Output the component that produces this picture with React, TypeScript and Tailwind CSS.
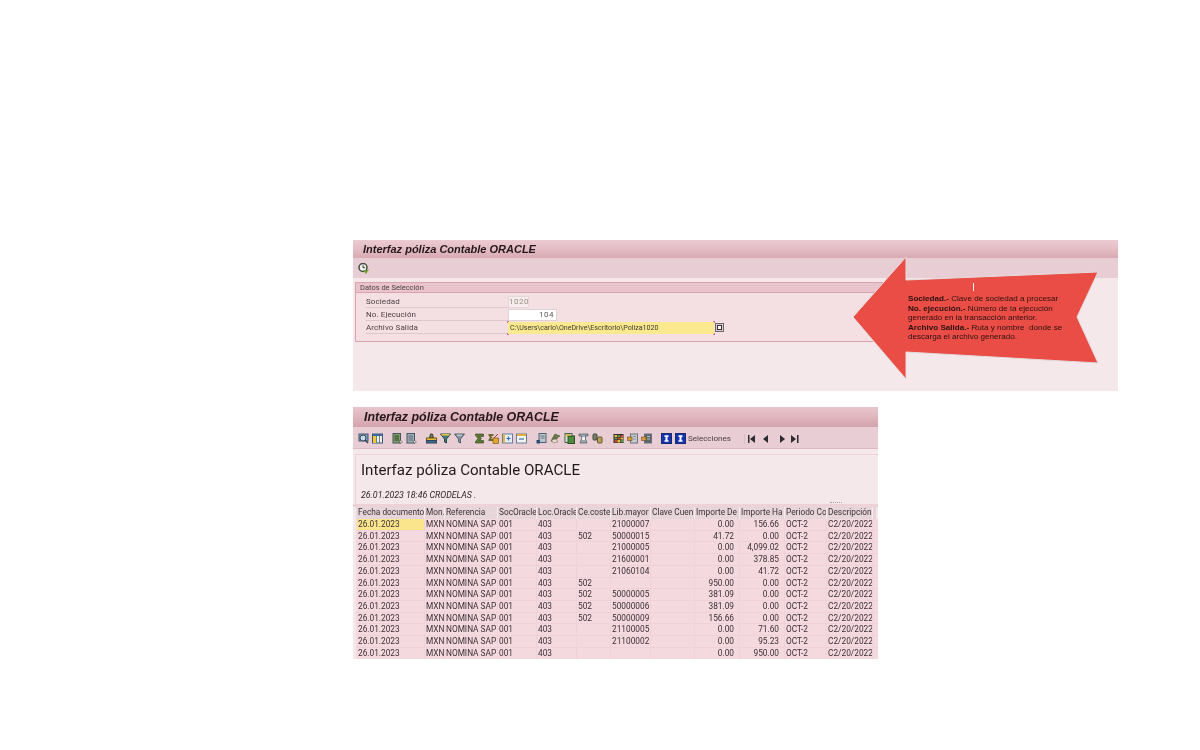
const columns = [
  { label: 'Fecha documento', w: 'w-[68px]' },
  { label: 'Mon.', w: 'w-[20px]' },
  { label: 'Referencia', w: 'w-[53px]' },
  { label: 'SocOracle', w: 'w-[39px]' },
  { label: 'Loc.Oracle', w: 'w-[40px]' },
  { label: 'Ce.coste', w: 'w-[34px]' },
  { label: 'Lib.mayor', w: 'w-[40px]' },
  { label: 'Clave Cuen', w: 'w-[44px]' },
  { label: 'Importe De', w: 'w-[45px]' },
  { label: 'Importe Ha', w: 'w-[45px]' },
  { label: 'Periodo Co', w: 'w-[42px]' },
  { label: 'Descripción', w: 'w-[46px]' },
];

const rows = [
  ['', '21000007', '0.00', '156.66'],
  ['502', '50000015', '41.72', '0.00'],
  ['', '21000005', '0.00', '4,099.02'],
  ['', '21600001', '0.00', '378.85'],
  ['', '21060104', '0.00', '41.72'],
  ['502', '', '950.00', '0.00'],
  ['502', '50000005', '381.09', '0.00'],
  ['502', '50000006', '381.09', '0.00'],
  ['502', '50000009', '156.66', '0.00'],
  ['', '21100005', '0.00', '71.60'],
  ['', '21100002', '0.00', '95.23'],
  ['', '', '0.00', '950.00'],
];

function Cell({ i, right, first, children }: { i: number; right?: boolean; first?: boolean; children?: React.ReactNode }) {
  return (
    <div
      className={`${columns[i].w} shrink-0 h-full px-[1px] border-r border-[#f0d3da] leading-[11px] whitespace-nowrap overflow-hidden ${right ? 'text-right pr-[5px]' : ''} ${first ? 'bg-[#fbe58c]' : ''}`}
    >
      {children}
    </div>
  );
}

function Ico({ children }: { children: React.ReactNode }) {
  return (
    <svg viewBox="0 0 11 11" className="w-[11px] h-[11px] shrink-0">
      {children}
    </svg>
  );
}

const Search = () => (
  <Ico>
    <rect x="1" y="1" width="9" height="7" fill="#7c9fbb" stroke="#47586b" />
    <circle cx="5" cy="5" r="3" fill="#c4d9ea" stroke="#39485a" />
    <path d="M7 7l3 3" stroke="#39485a" strokeWidth="1.6" />
  </Ico>
);
const Layout = () => (
  <Ico>
    <rect x="0.5" y="1" width="10" height="9" fill="#f5f0d8" stroke="#3d5a80" />
    <rect x="1" y="1" width="9" height="2" fill="#3d6a9b" />
    <rect x="1" y="3" width="3" height="7" fill="#f0c832" />
    <path d="M4.5 3v7M7.5 3v7" stroke="#5b7da3" />
  </Ico>
);
const Doc = ({ green }: { green?: boolean }) => (
  <Ico>
    <rect x="1" y="0.5" width="7.5" height="9.5" fill={green ? '#83a06f' : '#9fb0bb'} stroke="#46545f" />
    <path d="M2.5 3h4.5M2.5 5h4.5M2.5 7h4.5" stroke={green ? '#23441c' : '#5b6b77'} />
    <path d="M8 7l2.5 2-2.5 1.5z" fill="#fff" stroke="#333" strokeWidth="0.5" />
  </Ico>
);
const Bell = () => (
  <Ico>
    <path d="M3.5 5L4.5 1h2l1 4z" fill="#6d7f55" stroke="#3a4530" />
    <rect x="0.5" y="5" width="10" height="2.5" fill="#e8b93b" stroke="#6f5a20" />
    <rect x="0.5" y="7.5" width="10" height="2.5" fill="#3c6d94" stroke="#2d4257" />
  </Ico>
);
const Funnel = ({ grey }: { grey?: boolean }) => (
  <Ico>
    <path d="M0.5 1h10L6.5 6v4l-2-1V6z" fill={grey ? '#8b98a3' : '#3d7b7a'} stroke={grey ? '#56616b' : '#234a4a'} />
    {!grey && <rect x="1.5" y="1" width="8" height="1.6" fill="#e9c23c" />}
    {grey && <path d="M3 2.2h5" stroke="#d7dde2" />}
  </Ico>
);
const Sigma = () => (
  <Ico>
    <path d="M1.5 1h8v2.5H5.5l2 2-2 2h4V10h-8V8.5L4 5.5 1.5 2.5z" fill="#5f7a33" stroke="#2f3e1b" strokeWidth="0.6" />
  </Ico>
);
const Subtotal = () => (
  <Ico>
    <path d="M0.5 1h5v2H3l1.5 1.5L3 6h2.5v2h-5V6.5L2 4.5 0.5 2.5z" fill="#6b6b2a" />
    <rect x="5" y="5" width="5.5" height="5.5" fill="#e2a72c" stroke="#6f4f14" strokeWidth="0.6" />
    <path d="M10 1L6 5" stroke="#a33" />
  </Ico>
);
const Plus = () => (
  <Ico>
    <rect x="0.5" y="1" width="10" height="9" fill="#e6eef8" stroke="#5e7fa6" />
    <rect x="1" y="1" width="2" height="9" fill="#e2b73c" />
    <path d="M6.5 3.5v4M4.5 5.5h4" stroke="#3f6fb0" strokeWidth="1.2" />
  </Ico>
);
const Minus = () => (
  <Ico>
    <rect x="0.5" y="1" width="10" height="9" fill="#f2f3f3" stroke="#6d7d8f" />
    <rect x="1" y="1" width="9" height="2" fill="#e2b13c" />
    <path d="M3 6h5" stroke="#3f6f9b" strokeWidth="1.2" />
  </Ico>
);
const Export = () => (
  <Ico>
    <rect x="3" y="0.5" width="7" height="9" fill="#b9c4ce" stroke="#55626f" />
    <path d="M4.5 3h4M4.5 5h4" stroke="#6c7a87" />
    <rect x="0.5" y="7" width="3.5" height="3.5" fill="#2d4f7b" />
  </Ico>
);
const Arrows = () => (
  <Ico>
    <path d="M5 1l5 2-3 2v1H4L1 8.5 2.5 5z" fill="#6a7a4c" stroke="#3a4428" strokeWidth="0.5" />
    <path d="M1.5 7l5-1 1 3-4 1z" fill="#e9dfc4" stroke="#67604a" strokeWidth="0.5" />
  </Ico>
);
const Sheet = () => (
  <Ico>
    <rect x="1" y="0.5" width="7" height="9" fill="#dfe7d5" stroke="#46604d" />
    <rect x="4" y="3" width="6.5" height="7.5" fill="#4d8a3e" stroke="#2b4f23" />
    <path d="M1.5 2h5" stroke="#d9a82c" strokeWidth="1.4" />
  </Ico>
);
const Graph = () => (
  <Ico>
    <path d="M1 1h9v2H7.5v3L9 10H2l1.5-4V3H1z" fill="#9ba7ae" stroke="#4d5a62" strokeWidth="0.7" />
    <rect x="4" y="4" width="3" height="3" fill="#eef1f2" />
  </Ico>
);
const Gears = () => (
  <Ico>
    <rect x="1" y="1" width="4" height="6" rx="1" fill="#74806a" stroke="#3f4638" />
    <rect x="5.5" y="4" width="4.5" height="6" rx="1" fill="#c0a35a" stroke="#5d5230" />
  </Ico>
);
const Colored = () => (
  <Ico>
    <rect x="0.5" y="1" width="10" height="9" fill="#2a2a2a" />
    <rect x="1.5" y="2" width="2.5" height="2" fill="#e7c43a" />
    <rect x="4.5" y="2" width="2.5" height="2" fill="#5d9a45" />
    <rect x="7.5" y="2" width="2.5" height="2" fill="#c8473a" />
    <rect x="1.5" y="4.5" width="2.5" height="2" fill="#5d9a45" />
    <rect x="4.5" y="4.5" width="2.5" height="2" fill="#c8473a" />
    <rect x="7.5" y="4.5" width="2.5" height="2" fill="#e7c43a" />
    <rect x="1.5" y="7" width="2.5" height="2.5" fill="#c8473a" />
    <rect x="4.5" y="7" width="2.5" height="2.5" fill="#e7c43a" />
    <rect x="7.5" y="7" width="2.5" height="2.5" fill="#5d9a45" />
  </Ico>
);
const Cube = ({ dark }: { dark?: boolean }) => (
  <Ico>
    <rect x="3.5" y="1" width="7" height="9" fill={dark ? '#59636b' : '#c6ccd0'} stroke="#69737b" />
    <rect x="0.5" y="4" width="4.5" height="3.5" fill="#d99c35" stroke="#6d4c16" strokeWidth="0.6" />
    <path d="M6 3.5h3M6 6h3" stroke={dark ? '#c4cace' : '#879299'} />
  </Ico>
);
const Info = () => (
  <Ico>
    <rect x="0.5" y="0.5" width="10" height="10" fill="#1534b0" stroke="#1a2a6e" />
    <path d="M3.5 2.2h4V4h-1v3.300h1v1.500h-4V7.300h1V4h-1z" fill="#fff" />
  </Ico>
);
const Clock = () => (
  <svg viewBox="0 0 11 11" className="w-[11px] h-[11px] shrink-0">
    <circle cx="5" cy="4.5" r="4" fill="#f3f4ef" stroke="#3e4a3c" strokeWidth="1.5" />
    <path d="M5 2.200v2.500h2" stroke="#2f382d" fill="none" />
    <path d="M5.500 8L11 6.500 8 11z" fill="#6ea32f" />
  </svg>
);
const Nav = ({ d, className }: { d: string; className: string }) => (
  <svg viewBox="0 0 8 8" className={`w-[8px] h-[8px] shrink-0 ${className}`}>
    <path d={d} fill="#2d2a30" />
  </svg>
);

function FieldRow({ label, children }: { label: string; children: React.ReactNode }) {
  return (
    <div className="flex items-center h-[13px]">
      <div className="w-[142px] ml-[10px] h-full shrink-0 leading-[13px] text-[#4b3f43] text-[8px] border-b border-[#dcc8cd] tracking-[0.1px]">
        {label}
      </div>
      {children}
    </div>
  );
}

const Corner = ({ className }: { className: string }) => (
  <span className={`absolute w-[2px] h-[2px] border-[#d4768a] ${className}`} />
);

export default function App() {
  return (
    <div className="w-[1200px] h-[750px] bg-white overflow-hidden pt-[240px] pl-[353px] font-['Roboto',sans-serif]">
      <div className="relative w-[765px] h-[151px] bg-[#f5e8ea] overflow-hidden blur-[0.4px]">
        <div className="h-[18px] bg-gradient-to-b from-[#eccbd2] via-[#e4bcc4] to-[#d9aab3] pl-[10px] pt-[1px] flex items-center">
          <span className="font-['Liberation_Sans',sans-serif] italic font-bold text-[11px] text-[#23181c]">
            Interfaz póliza Contable ORACLE
          </span>
        </div>
        <div className="h-[20px] bg-[#e9cdd4] flex items-center pl-[5px]">
          <Clock />
        </div>
        <div className="ml-[2px] mt-[4px] w-[600px] h-[60px] border border-[#d9a3ae] bg-[#f4dfe3]">
          <div className="h-[10px] bg-[#e9c4cc] border-b border-[#d9a3ae] text-[7.5px] leading-[9px] pl-[4px] text-[#4b3f43]">
            Datos de Selección
          </div>
          <div className="pt-[2px]">
            <FieldRow label="Sociedad">
              <div className="w-[21px] h-[12px] bg-[#f6ecee] border border-[#e4d8db] text-[8px] leading-[10px] text-[#9a8d80] text-center tracking-[0.5px]">
                1020
              </div>
            </FieldRow>
            <FieldRow label="No. Ejecución">
              <div className="w-[49px] h-[12px] bg-white border border-[#dfd3d6] text-[8px] leading-[10px] text-right pr-[2px] text-[#5c5257] tracking-[0.5px]">
                104
              </div>
            </FieldRow>
            <FieldRow label="Archivo Salida">
              <div className="relative w-[206px] h-[12px] bg-[#fbe98f] text-[7.1px] leading-[12px] pl-[2px] text-[#3d3a30] whitespace-nowrap">
                C:\Users\carlo\OneDrive\Escritorio\Poliza1020
                <Corner className="-left-[1px] -top-[1px] border-l border-t" />
                <Corner className="-right-[1px] -top-[1px] border-r border-t" />
                <Corner className="-left-[1px] -bottom-[1px] border-l border-b" />
                <Corner className="-right-[1px] -bottom-[1px] border-r border-b" />
              </div>
              <div className="ml-[1px] w-[9px] h-[9px] bg-[#d9c9cd] border border-[#6f666a] flex items-center justify-center">
                <div className="w-[5px] h-[5px] bg-white border border-[#3a3438]" />
              </div>
            </FieldRow>
          </div>
        </div>
        <svg viewBox="0 0 260 135" className="absolute left-[498px] top-[15px] w-[260px] h-[135px]">
          <polygon
            points="2,62 55,2 55,25 247,17 226,62 247,108 55,97 55,124"
            fill="#ea4c46"
            stroke="#e3dcdc"
            strokeWidth="1"
          />
        </svg>
        <span className="absolute left-[620px] top-[43px] w-[1px] h-[8px] bg-white" />
        <div className="absolute left-[555px] top-[54px] text-[8.1px] leading-[9.5px] text-[#2b1210] font-['Liberation_Sans',sans-serif] whitespace-nowrap">
          <div><b>Sociedad.-</b> Clave de sociedad a procesar</div>
          <div><b>No. ejecución.-</b> Número de la ejecución</div>
          <div>generado en la transacción anterior.</div>
          <div><b>Archivo Salida.-</b> Ruta y nombre&nbsp; donde se</div>
          <div>descarga el archivo generado.</div>
        </div>
      </div>

      <div className="relative mt-[16px] w-[525px] h-[252px] bg-[#f5e8ea] overflow-hidden blur-[0.4px]">
        <div className="h-[20px] bg-gradient-to-b from-[#e9c5cd] via-[#e0b5be] to-[#d5a3ad] pl-[11px] flex items-center">
          <span className="font-['Liberation_Sans',sans-serif] italic font-bold text-[12.4px] text-[#23181c]">
            Interfaz póliza Contable ORACLE
          </span>
        </div>
        <div className="h-[22px] pt-[2px] bg-[#e9cdd4] border-b border-[#dcb8c0] flex items-center pl-[5px] gap-[3px]">
          <Search /><Layout />
          <div className="w-[3px]" />
          <Doc green /><Doc />
          <div className="w-[3px]" />
          <Bell /><Funnel /><Funnel grey />
          <div className="w-[3px]" />
          <Sigma /><Subtotal /><Plus /><Minus />
          <div className="w-[3px]" />
          <Export /><Arrows /><Sheet /><Graph /><Gears />
          <div className="w-[4px]" />
          <Colored /><Cube /><Cube dark />
          <div className="w-[3px]" />
          <Info /><Info />
          <span className="text-[8px] text-[#4a4045] -ml-[1px]">Selecciones</span>
          <div className="w-[1px] h-[10px] bg-[#dcbcc4] ml-[10px]" />
          <div className="flex items-center">
            <Nav className="ml-[0px]" d="M0 0h1.5v8H0zM7 0v8L2 4z" />
            <Nav className="ml-[6px]" d="M6 0v8L1 4z" />
            <Nav className="ml-[8px]" d="M2 0v8l5-4z" />
            <Nav className="ml-[5px]" d="M0 0v8l5-4zM6 0h1.5v8H6z" />
          </div>
        </div>
        <div className="h-[50px] mt-[5px] ml-[2px] pl-[5px] pt-[3px] border-t border-l border-[#ecd6db]">
          <div className="text-[15.1px] leading-[24px] text-[#22191c]">
            Interfaz póliza Contable ORACLE
          </div>
          <div className="mt-[7px] text-[8.8px] italic text-[#2f2629]">
            26.01.2023 18:46 CRODELAS .
          </div>
        </div>
        <div className="h-[3px] bg-[#eed2d8]" />
        <span className="absolute left-[477px] top-[95px] w-[12px] h-[1px] border-t border-dotted border-[#a89ca0]" />
        <div className="ml-[3px] text-[8.3px] text-[#3a3034]">
          <div className="h-[12px] flex pl-[1px] bg-[#e7d6d9] w-[520px]">
            {columns.map((c) => (
              <div key={c.label} className={`${c.w} shrink-0 px-[1px] border-r border-[#f5ecee] leading-[11px] whitespace-nowrap overflow-hidden`}>
                {c.label}
              </div>
            ))}
          </div>
          <div className="bg-[#f4d9df] pl-[1px] w-[522px]">
            {rows.map((r, n) => (
              <div key={n} className="h-[11.73px] flex border-b border-[#efd2d9]">
                <Cell i={0} first={n === 0}>26.01.2023</Cell>
                <Cell i={1}>MXN</Cell>
                <Cell i={2}>NOMINA SAP</Cell>
                <Cell i={3}>001</Cell>
                <Cell i={4}>403</Cell>
                <Cell i={5}>{r[0]}</Cell>
                <Cell i={6}>{r[1]}</Cell>
                <Cell i={7} />
                <Cell i={8} right>{r[2]}</Cell>
                <Cell i={9} right>{r[3]}</Cell>
                <Cell i={10}>OCT-2</Cell>
                <Cell i={11}>C2/20/2022</Cell>
              </div>
            ))}
          </div>
        </div>
      </div>
    </div>
  );
}
